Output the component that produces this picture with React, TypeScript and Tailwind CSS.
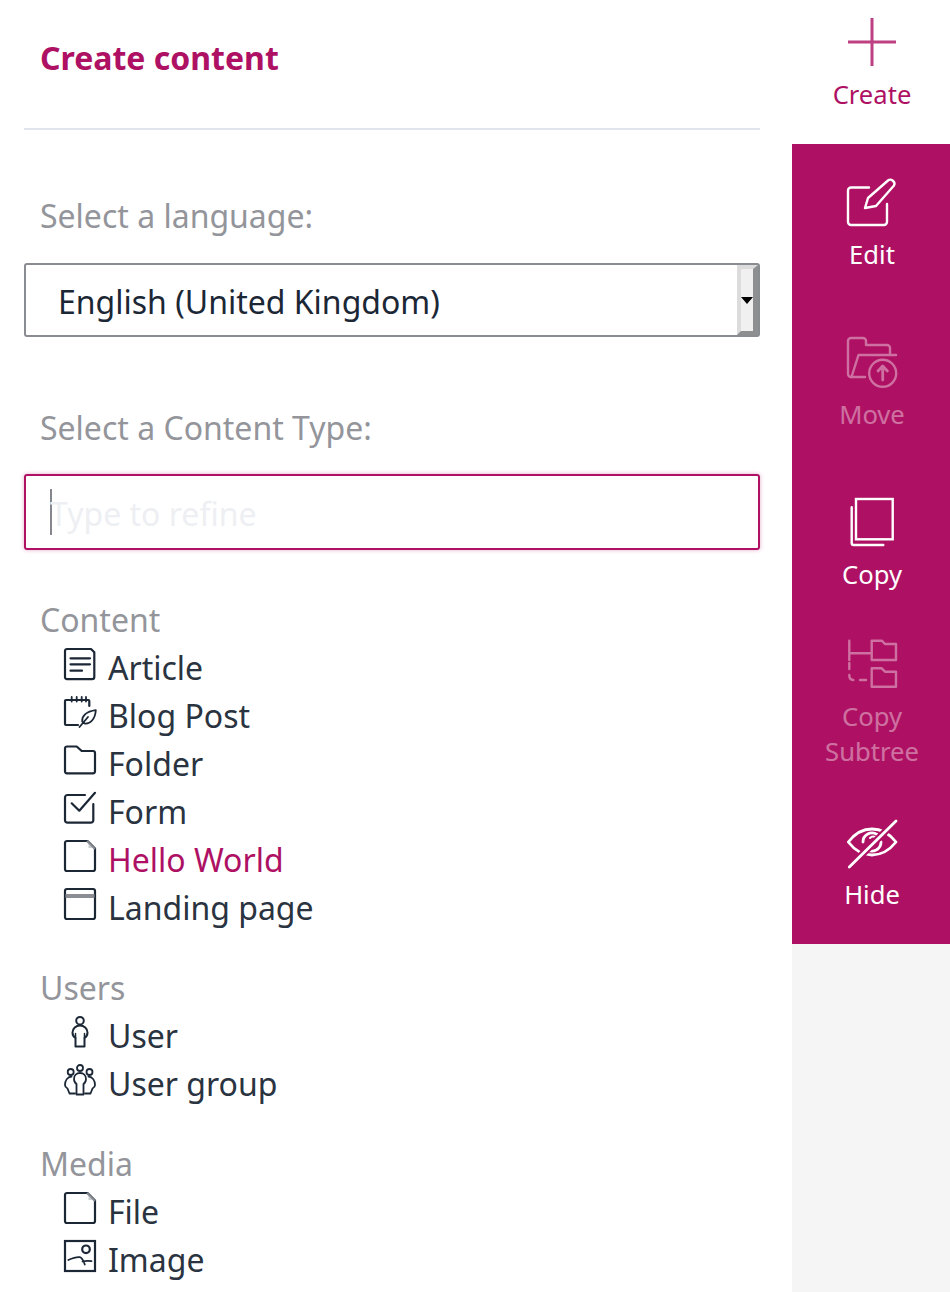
import React from "react";

const font = { fontFamily: '"Noto Sans", sans-serif' };

function Ico({ children, size = 32, sw = 2.2 }: { children: React.ReactNode; size?: number; sw?: number }) {
  return (
    <svg width={size} height={size} viewBox={`0 0 ${size} ${size}`} fill="none" stroke="currentColor" strokeWidth={sw} strokeLinecap="round" strokeLinejoin="round" className="block shrink-0 overflow-visible">
      {children}
    </svg>
  );
}

const FilePage = () => (
  <Ico>
    <path d="M23.500 1H3a2 2 0 0 0-2 2v26a2 2 0 0 0 2 2h26a2 2 0 0 0 2-2V8.500z" />
    <path d="M23.500 1.500l7 7" stroke="#8a8d93" strokeWidth="2" />
    <path d="M24.500 3.500l4 4.500h-4z" fill="#c9cbd0" stroke="none" />
  </Ico>
);
const icons: Record<string, React.ReactNode> = {
  article: (
    <Ico>
      <path d="M3 1h24l3.300 3.300V29a2.200 2.200 0 0 1-2.200 2.200H3A2 2 0 0 1 1 29V3a2 2 0 0 1 2-2z" />
      <path d="M6.500 10.300h19.500M6.500 16.300h19.500M6.500 22.700h11.500" />
    </Ico>
  ),
  blog: (
    <Ico>
      <path d="M25.300 10V5a1 1 0 0 0-1-1H2a1 1 0 0 0-1 1v23a1 1 0 0 0 1 1h12" />
      <path d="M7.700 1v4.500M12.700 1v4.500M17.700 1v4.500M22 1v4.500" strokeWidth="1.800" />
      <path d="M15.500 31L24 21M18.200 25.500c-.5-5 3.500-10 13.600-11.300-.5 9-5.800 14-11 13.300z" strokeWidth="1.800" />
    </Ico>
  ),
  folder: (
    <Ico>
      <path d="M1 4.500a2 2 0 0 1 2-2h9.700l5 4.500H29a2 2 0 0 1 2 2v18.300a2 2 0 0 1-2 2H3a2 2 0 0 1-2-2z" />
    </Ico>
  ),
  form: (
    <Ico>
      <path d="M21 3H3.500A2.500 2.500 0 0 0 1 5.500v22.700a2.500 2.500 0 0 0 2.500 2.500h23.300a2.500 2.500 0 0 0 2.500-2.500V12" />
      <path d="M7.700 11.300l7.600 7.400L31 .8" />
    </Ico>
  ),
  file: <FilePage />,
  landing: (
    <Ico>
      <rect x="1" y="1" width="30" height="30" rx="2" />
      <path d="M1.500 8h29" stroke="#8a8d93" strokeWidth="4" strokeLinecap="butt" />
    </Ico>
  ),
  user: (
    <Ico sw={2}>
      <circle cx="16" cy="4.700" r="3.800" />
      <path d="M16 9.500c-4 0-7.500 3-7.500 7 0 2.700 1 4.400 3 5.400v8.600h9v-8.600c2-1 3-2.700 3-5.400 0-4-3.500-7-7.500-7z" />
      <path d="M11.500 17.500V22M20.500 17.500V22" strokeWidth="1.500" />
    </Ico>
  ),
  group: (
    <Ico sw={1.800}>
      <circle cx="16" cy="4" r="3" />
      <circle cx="6.700" cy="8" r="3" />
      <circle cx="25.500" cy="8" r="3" />
      <path d="M16 9c-3.500 0-6 2.500-6 6 0 2.500 1 4 2.500 5v10.500h7V20c1.500-1 2.500-2.500 2.500-5 0-3.500-2.500-6-6-6z" />
      <path d="M7.500 12.500C3.500 13 1 16.500 1 21c0 2 1.500 3 2.500 3.500L5.500 29.500H11M24.500 12.500c4 .5 6.500 4 6.500 8.500 0 2-1.500 3-2.500 3.500l-2 5H21" />
    </Ico>
  ),
  image: (
    <Ico>
      <rect x="1" y="1" width="30" height="30" strokeLinejoin="miter" />
      <circle cx="22" cy="9.300" r="3.800" />
      <path d="M4.300 20c4-1.800 8-3.300 11.500-2.800 1.500.3 3 1.800 5 7.300M18.500 21.500c3-.8 6-.8 9-.3" strokeWidth="1.800" />
    </Ico>
  ),
};

const sideIcons: Record<string, React.ReactNode> = {
  edit: (
    <Ico size={52} sw={2.400}>
      <path d="M23 9.500H5a3 3 0 0 0-3 3V44a3 3 0 0 0 3 3h33a3 3 0 0 0 3-3V26" />
      <path d="M19 30l3-10L42 2.500c3-2.500 8 1.500 6 5L30 28z" />
    </Ico>
  ),
  move: (
    <Ico size={52} sw={2.400}>
      <path d="M44 19v-7a3 3 0 0 0-3-3H20V5a3 3 0 0 0-3-3H5a3 3 0 0 0-3 3v33a3 3 0 0 0 3 3h14" />
      <path d="M50 19H12.500L5.500 41" />
      <circle cx="36.700" cy="37.300" r="13.500" fill="#ae1163" />
      <path d="M36.700 44V31M32 35l4.700-5 4.700 5" strokeWidth="2.800" />
    </Ico>
  ),
  copy: (
    <Ico size={52} sw={2.400}>
      <rect x="10" y="4" width="36.700" height="40.300" strokeLinecap="butt" strokeLinejoin="miter" />
      <path d="M5.700 12.300V48a2 2 0 0 0 2 2h29.600" />
    </Ico>
  ),
  subtree: (
    <Ico size={52} sw={2.400}>
      <path d="M3.300 2.700v19.300M3.300 15.300h22.400" />
      <path d="M25.700 2.700h10l3.300 3.300h11v16H25.700zM25.700 30.300h10l3.300 3.400h11v15H25.700z" />
      <path d="M3.300 25v6M3.300 37c0 3 1.500 5 4 5M14 42h6" />
    </Ico>
  ),
  hide: (
    <Ico size={52} sw={2.800}>
      <path d="M2.300 24C10 14 18 11 26 11s16 3 24 13c-8 10-16 13-24 13S10 34 2.300 24z" />
      <path d="M17 24a9 9 0 0 1 14-7.500M35 24a9 9 0 0 1-14 7.500" />
      <path d="M24 20a4.500 4.500 0 0 1 5-1M28 28a4.500 4.500 0 0 1-5 1" strokeWidth="2" />
      <path d="M3.300 49L50 3" stroke="#ae1163" strokeWidth="7" />
      <path d="M3.300 49L50 3" />
    </Ico>
  ),
};

function Row({ icon, label, active }: { icon: string; label: string; active?: boolean }) {
  return (
    <div className="flex h-12 items-center pl-10">
      <span className="mb-2 text-[#1c2736]">{icons[icon]}</span>
      <span className={`ml-3 text-[32px] leading-[48px] ${active ? "text-[#ae1163]" : "text-[#2a3340]"}`}>{label}</span>
    </div>
  );
}

function Group({ title, cls, children }: { title: string; cls: string; children: React.ReactNode }) {
  return (
    <div className={cls}>
      <div className="pl-4 text-[32px] leading-[48px] text-[#93959b]">{title}</div>
      {children}
    </div>
  );
}

function Side({ icon, label, dim, cls, gap }: { icon: string; label: string; dim?: boolean; cls: string; gap: string }) {
  return (
    <div className={`flex flex-col items-center pl-[2px] text-white ${cls}`}>
      <div className={dim ? "opacity-40" : ""}>{sideIcons[icon]}</div>
      <div className={`text-center text-[25.6px] leading-[35px] ${gap} ${dim ? "opacity-40" : ""}`}>{label}</div>
    </div>
  );
}

export default function App() {
  return (
    <div style={font} className="flex h-[1292px] w-[950px] overflow-hidden bg-white">
      <div className="w-[792px] shrink-0 pl-6 pr-8">
        <div className="h-[130px] border-b-2 border-[#e1e4ec] pl-4 pt-[35px] text-[32px] font-bold leading-[46px] text-[#ae1163]">Create content</div>
        <div className="mt-[62px] pl-4 text-[32px] leading-[48px] text-[#93959b]">Select a language:</div>
        <div className="mt-[23px] flex h-[74px] w-[736px] items-stretch rounded-[3px] border-2 border-[#898c90]">
          <div className="flex-1 pl-[32px] text-[32px] leading-[74px] text-[#1c2736]">English (United Kingdom)</div>
          <div className="flex w-[21px] items-center justify-center border-b-4 border-l-4 border-r-[5px] border-t-4 border-b-[#8e8f91] border-l-[#dcdcdc] border-r-[#8e8f91] border-t-[#dcdcdc] bg-[#f0f0f0]">
            <div className="h-0 w-0 border-x-[6px] border-t-[7px] border-x-transparent border-t-black" />
          </div>
        </div>
        <div className="mt-[67px] pl-4 text-[32px] leading-[48px] text-[#93959b]">Select a Content Type:</div>
        <div className="mt-[22px] flex h-[76px] w-[736px] items-center rounded-[3px] border-2 border-[#ae1163] pl-6 shadow-[0_0_4px_rgba(174,17,99,0.35)]">
          <div className="h-[46px] w-[2px] shrink-0 bg-[#85878c]" />
          <input readOnly placeholder="Type to refine" className="-ml-[2px] min-w-0 flex-1 bg-transparent pt-[4px] text-[32px] outline-none placeholder:text-[#eeeff3]" />
        </div>
        <Group title="Content" cls="mt-[46px]">
          <Row icon="article" label="Article" />
          <Row icon="blog" label="Blog Post" />
          <Row icon="folder" label="Folder" />
          <Row icon="form" label="Form" />
          <Row icon="file" label="Hello World" active />
          <Row icon="landing" label="Landing page" />
        </Group>
        <Group title="Users" cls="mt-8">
          <Row icon="user" label="User" />
          <Row icon="group" label="User group" />
        </Group>
        <Group title="Media" cls="mt-8">
          <Row icon="file" label="File" />
          <Row icon="image" label="Image" />
        </Group>
      </div>
      <div className="flex w-[158px] flex-col bg-[#f5f5f5]">
        <div className="flex h-[144px] flex-col items-center bg-white pl-[2px] pt-4 text-[#ae1163]">
          <svg width="52" height="52" viewBox="0 0 52 52" className="block opacity-80" stroke="#ae1163" strokeWidth="3">
            <path d="M26 2v48M2 26h48" />
          </svg>
          <div className="mt-[9px] text-[25.6px] leading-[35px]">Create</div>
        </div>
        <div className="flex h-[800px] flex-col bg-[#ae1163]">
          <Side icon="edit" label="Edit" gap="mt-[7px]" cls="h-[160px] pt-[34px]" />
          <Side icon="move" label="Move" dim gap="mt-[9px]" cls="h-[160px] pt-[32px]" />
          <Side icon="copy" label="Copy" gap="mt-[10px]" cls="h-[142px] pt-[31px]" />
          <Side icon="subtree" label="Copy Subtree" dim gap="mt-[9px]" cls="h-[178px] w-[120px] self-center pt-[32px]" />
          <Side icon="hide" label="Hide" gap="mt-[7px]" cls="h-[160px] pt-[34px]" />
        </div>
      </div>
    </div>
  );
}
